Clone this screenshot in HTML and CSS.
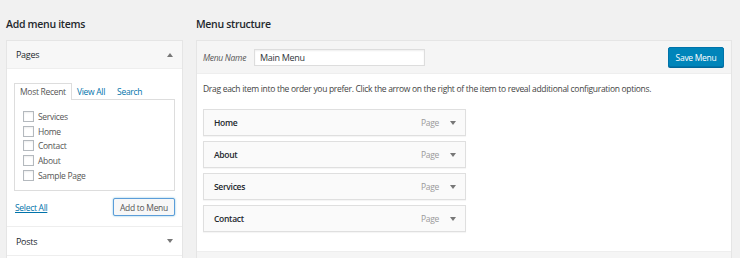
FILE: index.html
```html
<!DOCTYPE html>
<html>
<head>
<meta charset="utf-8">
<link rel="stylesheet" href="styles.css">
</head>
<body>
<div class="wrap">
  <div class="col-left">
    <h2 class="title">Add menu items</h2>
    <div class="accordion">
      <div class="section open">
        <div class="sec-head"><span>Pages</span><span class="arrow up"></span></div>
        <div class="sec-body">
          <div class="tabs">
            <span class="tab active">Most Recent</span>
            <a class="tab">View All</a>
            <a class="tab">Search</a>
          </div>
          <div class="tab-panel">
            <label class="chk"><span class="box"></span>Services</label>
            <label class="chk"><span class="box"></span>Home</label>
            <label class="chk"><span class="box"></span>Contact</label>
            <label class="chk"><span class="box"></span>About</label>
            <label class="chk"><span class="box"></span>Sample Page</label>
          </div>
          <div class="actions">
            <a class="select-all">Select All</a>
            <button class="btn-add">Add to Menu</button>
          </div>
        </div>
      </div>
      <div class="section">
        <div class="sec-head plain"><span>Posts</span><span class="arrow down"></span></div>
      </div>
      <div class="section">
        <div class="sec-head plain"><span></span></div>
      </div>
    </div>
  </div>
  <div class="col-right">
    <h2 class="title">Menu structure</h2>
    <div class="menu-edit">
      <div class="menu-head">
        <label class="name-label">Menu Name</label>
        <input class="name-input" type="text" value="Main Menu">
        <button class="btn-save">Save Menu</button>
      </div>
      <div class="menu-body">
        <p class="hint">Drag each item into the order you prefer. Click the arrow on the right of the item to reveal additional configuration options.</p>
        <ul class="items">
          <li class="item"><span class="item-title">Home</span><span class="item-type">Page</span><span class="arrow down"></span></li>
          <li class="item"><span class="item-title">About</span><span class="item-type">Page</span><span class="arrow down"></span></li>
          <li class="item"><span class="item-title">Services</span><span class="item-type">Page</span><span class="arrow down"></span></li>
          <li class="item"><span class="item-title">Contact</span><span class="item-type">Page</span><span class="arrow down"></span></li>
        </ul>
      </div>
      <div class="menu-foot"></div>
    </div>
  </div>
</div>
</body>
</html>
```

FILE: styles.css
```css
* { box-sizing: border-box; }
html, body { margin: 0; padding: 0; }
body {
  background: #f1f1f1;
  font-family: "Open Sans", "Noto Sans", sans-serif;
  color: #444;
  font-size: 8.5px;
  letter-spacing: -0.3px;
  width: 740px;
  height: 258px;
  overflow: hidden;
}
.wrap {
  display: flex;
  gap: 13px;
  padding: 0 8px 0 6px;
}
.col-left { width: 177px; flex: none; }
.col-right { flex: 1; }
.title {
  margin: 0;
  padding: 16px 0 8px 0;
  font-size: 10.5px;
  letter-spacing: -0.3px;
  line-height: 16px;
  font-weight: 600;
  color: #23282d;
}
.accordion {
  background: #fff;
  border: 1px solid #e5e5e5;
  border-bottom: none;
  height: 218px;
  overflow: hidden;
}
.section + .section { border-top: 1px solid #eee; }
.sec-head {
  height: 28px;
  display: flex;
  align-items: center;
  justify-content: space-between;
  padding: 0 9px 0 9px;
  font-size: 9px;
  color: #23282d;
  background: #f7f7f7;
  border-bottom: 1px solid #eee;
}
.sec-head.plain { background: #fff; border-bottom: none; }
.arrow {
  width: 0; height: 0;
  border-left: 3px solid transparent;
  border-right: 3px solid transparent;
}
.arrow.up { border-bottom: 4px solid #777; }
.arrow.down { border-top: 4px solid #777; }
.sec-body { padding: 14px 7px 10px 7px; }
.tabs { display: flex; align-items: flex-end; height: 16px; }
.tab {
  font-size: 8.5px;
  line-height: 15px;
  padding: 0 5px;
  color: #0073aa;
}
.tab.active {
  color: #555;
  border: 1px solid #ddd;
  border-bottom: none;
  background: #fff;
  height: 17px;
  margin-bottom: -1px;
  position: relative;
  padding: 0 5px;
  line-height: 16px;
  width: 58px;
}
.tabs a.tab:last-child { margin-left: 2px; }
.tab-panel {
  border: 1px solid #ddd;
  padding: 9px 8px 7px 8px;
  display: flex;
  flex-direction: column;
  height: 92px;
}
.chk {
  display: flex;
  align-items: center;
  height: 15px;
  font-size: 8.5px;
  color: #555;
}
.box {
  width: 11px; height: 11px;
  border: 1px solid #b4b9be;
  background: #fff;
  margin-right: 4px;
  box-shadow: inset 0 1px 2px rgba(0,0,0,0.07);
}
.actions {
  display: flex;
  justify-content: space-between;
  align-items: center;
  margin-top: 7px;
}
.select-all {
  font-size: 8.5px;
  color: #0073aa;
  text-decoration: underline;
  margin-left: 1px;
}
.btn-add {
  font-family: inherit;
  font-size: 8.5px;
  letter-spacing: -0.3px;
  color: #555;
  height: 18px;
  width: 62px;
  padding: 0;
  background: #f7f7f7;
  border: 1px solid #5b9dd9;
  border-radius: 2px;
  box-shadow: 0 0 2px rgba(30,140,190,0.6);
}
.menu-edit {
  border: 1px solid #e5e5e5;
  border-bottom: none;
  background: #fff;
  height: 218px;
  display: flex;
  flex-direction: column;
}
.menu-head {
  height: 33px;
  flex: none;
  background: #f5f5f5;
  border-bottom: 1px solid #eee;
  display: flex;
  align-items: center;
  padding: 0 7px 0 6px;
}
.name-label {
  font-style: italic;
  font-size: 8.5px;
  color: #555;
  width: 51px;
}
.name-input {
  font-family: inherit;
  font-size: 9px;
  letter-spacing: -0.3px;
  color: #32373c;
  width: 171px;
  height: 17px;
  border: 1px solid #ddd;
  padding: 0 0 0 5px;
  box-shadow: inset 0 1px 2px rgba(0,0,0,0.07);
  outline: none;
}
.btn-save {
  margin-left: auto;
  font-family: inherit;
  font-size: 8.5px;
  letter-spacing: -0.3px;
  color: #fff;
  background: #0085ba;
  border: 1px solid #0073aa;
  border-radius: 2px;
  height: 20px;
  width: 56px;
  padding: 0;
  box-shadow: 0 1px 0 #006799;
}
.menu-body { padding: 9px 6px; flex: 1; }
.hint {
  margin: 0 0 14px 0;
  font-size: 8.5px;
  line-height: 12px;
  color: #444;
}
.items { list-style: none; margin: 0; padding: 0; width: 263px; }
.item {
  height: 27px;
  margin-bottom: 5px;
  background: #fafafa;
  border: 1px solid #dfdfdf;
  display: flex;
  align-items: center;
  padding: 0 9px 0 10px;
  box-shadow: 0 1px 1px rgba(0,0,0,0.04);
}
.item-title { font-size: 8.5px; font-weight: 600; color: #23282d; flex: 1; }
.item-type { font-size: 8.5px; color: #999; margin-right: 11px; }
.menu-foot {
  height: 7px;
  flex: none;
  background: #f5f5f5;
  border-top: 1px solid #eee;
}
```
